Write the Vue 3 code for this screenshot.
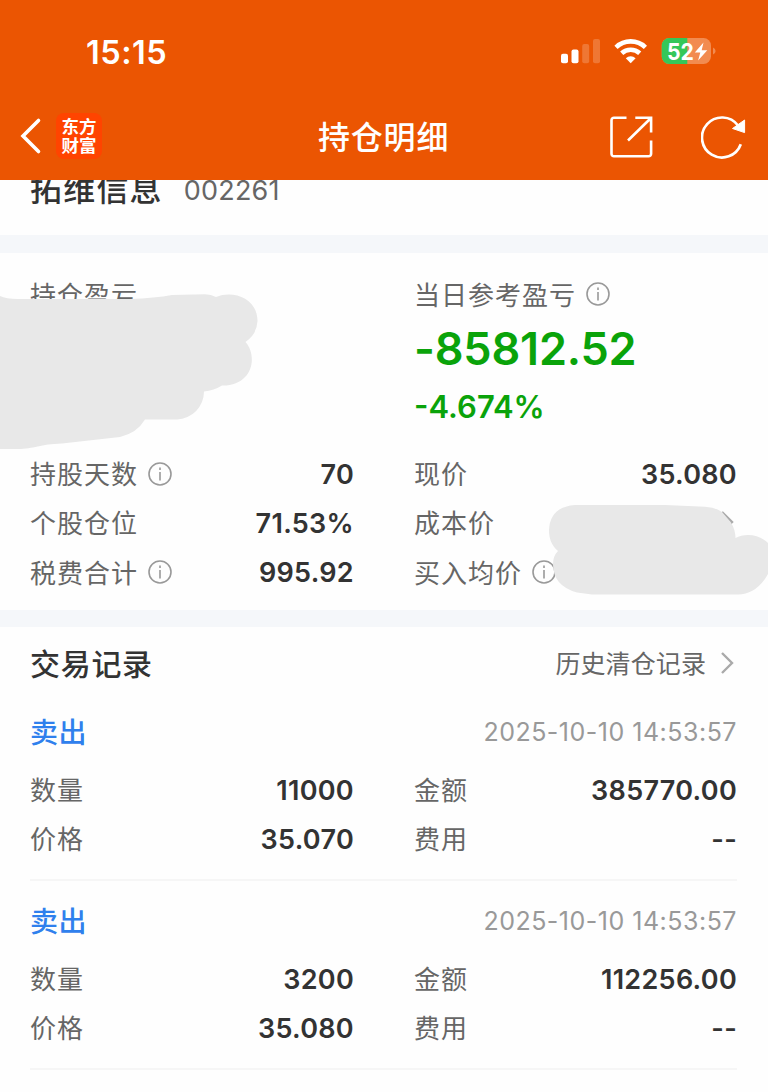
<template>
  <div class="page">
    <header class="header">
      <div class="status-bar">
        <span class="time">15:15</span>
        <svg class="status-icons" width="156" height="30" viewBox="0 0 156 30">
          <g fill="#fff">
            <rect x="1" y="17.7" width="7" height="9.6" rx="2" />
            <rect x="11.5" y="13.5" width="7" height="13.8" rx="2" />
            <rect x="22.2" y="8" width="7" height="19.3" rx="2" opacity="0.2" />
            <rect x="33" y="3" width="7" height="24.3" rx="2" opacity="0.2" />
          </g>
          <!-- wifi -->
          <g fill="none" stroke="#fff" stroke-width="4.6">
            <path d="M56 11.3a21.3 21.3 0 0 1 29.4 0" />
            <path d="M61.7 17.3a13.2 13.2 0 0 1 18 0" />
          </g>
          <path d="M65.8 22.2a7.2 7.2 0 0 1 9.8 0l-4.9 5.1z" fill="#fff" />
          <!-- battery -->
          <rect x="101.7" y="2" width="49.3" height="26" rx="7.5" fill="#f28b50" />
          <path d="M109.2 2H127.3V28H109.2a7.5 7.5 0 0 1-7.5-7.5V9.5a7.5 7.5 0 0 1 7.5-7.5z" fill="#35c759" />
          <path d="M153 11.5q2.6 1 2.6 3.5t-2.6 3.5z" fill="#f28b50" />
          <text class="battery-text" x="107" y="23.8" textLength="27" lengthAdjust="spacingAndGlyphs">52</text>
          <path d="M143.5 6.5L134.8 16.4h5.5l-2.2 8.1 9.2-10.3h-5.6z" fill="#fff" />
        </svg>
      </div>
      <div class="nav-bar">
        <svg class="back" width="22" height="40" viewBox="0 0 22 40">
          <path d="M18.5 3.5L3 19l15.5 15.5" fill="none" stroke="#fff" stroke-width="3.6" stroke-linecap="round" />
        </svg>
        <div class="logo"><span>东方</span><span>财富</span></div>
        <h1>持仓明细</h1>
        <svg class="share" width="44" height="44" viewBox="0 0 44 44">
          <g fill="none" stroke="#fff" stroke-width="2.6">
            <path d="M17.5 2.7H5a2.5 2.5 0 0 0-2.5 2.5v33.6a2.5 2.5 0 0 0 2.5 2.5h34.6a2.5 2.5 0 0 0 2.5-2.5V25.5" />
            <path d="M26.3 2.7H42.1V17.5M42 3L19 25.5" />
          </g>
        </svg>
        <svg class="refresh" width="46" height="46" viewBox="0 0 46 46">
          <path d="M39.8 30.3A20 20 0 1 1 37 11.5" fill="none" stroke="#fff" stroke-width="2.7" />
          <path d="M43.6 6V18.6L31.5 14.5z" fill="#fff" stroke="#fff" />
        </svg>
      </div>
    </header>

    <section class="stock">
      <span class="stock-name">拓维信息</span>
      <span class="stock-code">002261</span>
    </section>

    <section class="position">
      <div class="columns profit">
        <div class="label"><span>持仓盈亏</span></div>
        <div>
          <div class="label">
            <span>当日参考盈亏</span>
            <svg class="info" viewBox="0 0 24 24">
              <circle cx="12" cy="12" r="11" />
              <path d="M12 5.5v2.4M12 10v8.5" />
            </svg>
          </div>
          <p class="day-profit">-85812.52</p>
          <p class="day-rate">-4.674%</p>
        </div>
      </div>
      <div class="columns">
        <div v-for="item in stats" :key="item.label" class="row">
          <span class="label">
            <span>{{ item.label }}</span>
            <svg v-if="item.info" class="info" viewBox="0 0 24 24">
              <circle cx="12" cy="12" r="11" />
              <path d="M12 5.5v2.4M12 10v8.5" />
            </svg>
          </span>
          <span class="value">{{ item.value }}</span>
          <svg v-if="item.link" class="arrow" viewBox="0 0 14 24">
            <path d="M2 2l10 10L2 22" />
          </svg>
        </div>
      </div>
      <!-- hidden amounts -->
      <svg class="mask" width="768" height="357" viewBox="0 253 768 357">
        <path d="M0 296Q6 299 18 299H130Q155 298 172 295L205 294.3Q211 294.5 216 297C233 290 257.5 298 257.5 321Q257 334 245.5 342C258 356 253 386 222 385.5Q214 390.5 204 391.5A28 28 0 0 1 177 419.5H145Q137 433 120 437L62 443.5C40 444 34 449 18 449H0z" />
        <path d="M575 505H665L705 506.7Q715 507 722 512L731 522.5Q735.5 530 735.5 538Q741 535 748 535Q760 535 768 543V574Q757 594 738 594.5H592L577 592.5Q553 586 553 564Q553 556 558 551C551 545 549 538 549 530Q550 507 575 505z" />
      </svg>
    </section>

    <section class="records">
      <div class="records-head">
        <h2>交易记录</h2>
        <a class="history">
          <span>历史清仓记录</span>
          <svg class="arrow" viewBox="0 0 14 24">
            <path d="M2 2l10 10L2 22" />
          </svg>
        </a>
      </div>
      <div v-for="(record, index) in records" :key="index" class="record">
        <div class="record-head">
          <span class="side">卖出</span>
          <span class="date">{{ record.date }}</span>
        </div>
        <div class="columns">
          <div v-for="item in record.items" :key="item.label" class="row">
            <span class="label"><span>{{ item.label }}</span></span>
            <span class="value">{{ item.value }}</span>
          </div>
        </div>
      </div>
    </section>
  </div>
</template>

<script setup>
const stats = [
  { label: "持股天数", value: "70", info: true },
  { label: "现价", value: "35.080" },
  { label: "个股仓位", value: "71.53%" },
  { label: "成本价", value: "", link: true },
  { label: "税费合计", value: "995.92", info: true },
  { label: "买入均价", value: "", info: true },
];

const records = [
  {
    date: "2025-10-10 14:53:57",
    items: [
      { label: "数量", value: "11000" },
      { label: "金额", value: "385770.00" },
      { label: "价格", value: "35.070" },
      { label: "费用", value: "--" },
    ],
  },
  {
    date: "2025-10-10 14:53:57",
    items: [
      { label: "数量", value: "3200" },
      { label: "金额", value: "112256.00" },
      { label: "价格", value: "35.080" },
      { label: "费用", value: "--" },
    ],
  },
];
</script>

<style>
body {
  margin: 0;
  background: #fefefe;
}
</style>

<style scoped>
.page {
  width: 768px;
  height: 1092px;
  overflow: hidden;
  background: #fefefe;
  color: #333;
  font-family: Inter, "Noto Sans CJK SC", sans-serif;
}
h1,
h2,
p {
  margin: 0;
}
svg {
  flex: none;
}
.header {
  position: relative;
  z-index: 1;
  height: 180px;
  background: #eb5502;
  color: #fff;
}
.status-bar {
  height: 94px;
  box-sizing: border-box;
  padding: 36px 52px 0 86px;
  display: flex;
  justify-content: space-between;
  align-items: flex-start;
}
.time {
  font-size: 32.5px;
  font-weight: 600;
  letter-spacing: 0.5px;
  line-height: 33px;
}
.battery-text {
  fill: #fff;
  font-size: 23.5px;
  font-weight: 700;
}
.nav-bar {
  height: 86px;
  display: grid;
  grid-template-columns: 36px 46px 1fr 44px 94px;
  align-items: center;
  padding: 0 21px 0 20px;
}
.logo {
  width: 46px;
  height: 46px;
  margin-bottom: 2px;
  border-radius: 8px;
  background: #ff4400;
  display: flex;
  flex-direction: column;
  align-items: center;
  justify-content: center;
  font-size: 17.5px;
  font-weight: 700;
  line-height: 19px;
}
h1 {
  font-size: 32px;
  font-weight: 500;
  letter-spacing: 0.8px;
  line-height: 40px;
  padding: 2px 0 0 216px;
  white-space: nowrap;
}
.share,
.refresh {
  justify-self: end;
}
.stock {
  height: 55px;
  padding: 0 30px;
  display: flex;
}
.stock-name {
  font-size: 32px;
  font-weight: 500;
  letter-spacing: 1.2px;
  line-height: 19px;
}
.stock-code {
  margin-left: 21px;
  font-size: 27px;
  letter-spacing: 0.2px;
  line-height: 21px;
  color: #666;
}
.position {
  position: relative;
  height: 357px;
  border-top: 18px solid #f5f7fa;
  border-bottom: 17px solid #f5f7fa;
}
.columns {
  display: grid;
  grid-template-columns: 324px 323px;
  column-gap: 60px;
  padding: 0 31px 0 30px;
}
.profit {
  height: 196px;
}
.profit .label {
  height: 82px;
}
.label {
  display: flex;
  align-items: center;
  gap: 10px;
  font-size: 26px;
  letter-spacing: 1px;
  line-height: 38px;
  white-space: nowrap;
  color: #666;
}
.label span {
  padding-top: 3px;
}
.info {
  width: 24px;
  height: 24px;
  fill: none;
  stroke: #999;
  stroke-width: 1.6;
}
.day-profit {
  font-size: 45px;
  font-weight: 600;
  letter-spacing: -0.2px;
  line-height: 28px;
  color: #0aa30a;
}
.day-rate {
  margin-top: 30px;
  font-size: 31px;
  font-weight: 600;
  line-height: 28px;
  color: #0aa30a;
}
.row {
  display: flex;
  align-items: center;
  height: 49.3px;
}
.value {
  margin-left: auto;
  padding-top: 1px;
  font-size: 27px;
  font-weight: 600;
  letter-spacing: 0.3px;
}
.arrow {
  width: 14px;
  height: 24px;
  fill: none;
  stroke: #aaa;
  stroke-width: 2.4;
}
.row .arrow {
  margin: 0 3.5px 1px 0;
}
.mask {
  position: absolute;
  top: 0;
  left: 0;
  fill: #e8e8e8;
}
.records-head {
  display: flex;
  align-items: center;
  justify-content: space-between;
  height: 72px;
  padding: 0 34px 0 30px;
}
h2 {
  font-size: 30px;
  font-weight: 500;
  letter-spacing: 0.7px;
  padding-bottom: 3px;
}
.history {
  display: flex;
  align-items: center;
  gap: 14px;
  font-size: 25px;
  letter-spacing: 0.1px;
  color: #666;
}
.history span {
  padding-bottom: 3px;
}
.record {
  height: 182px;
  box-sizing: border-box;
  border-bottom: 2px solid #f6f6f6;
  margin: 0 31px 7px 30px;
}
.record .columns {
  padding: 0;
}
.record-head {
  display: flex;
  align-items: center;
  justify-content: space-between;
  height: 66px;
}
.side {
  font-size: 28px;
  font-weight: 500;
  letter-spacing: 0.5px;
  color: #2f80ed;
  padding-bottom: 2px;
}
.date {
  font-size: 25px;
  letter-spacing: 0.5px;
  color: #999;
}
</style>
